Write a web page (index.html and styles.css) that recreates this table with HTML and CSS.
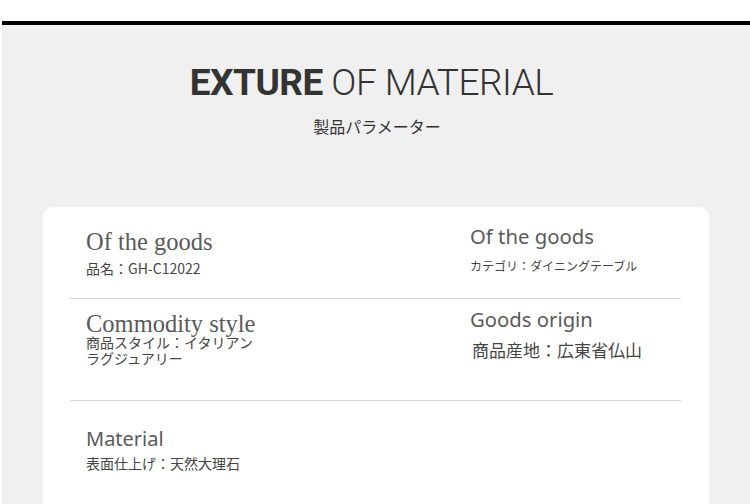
FILE: index.html
```html
<!DOCTYPE html>
<html lang="ja">
<head>
<meta charset="utf-8">
<link rel="stylesheet" href="styles.css">
</head>
<body>
<div class="page">
  <div class="panel">
    <h1 class="title"><span class="bold">EXTURE</span> OF MATERIAL</h1>
    <p class="subtitle">製品パラメーター</p>
    <div class="card">
      <div class="row row1">
        <div class="cell c1">
          <div class="name serif">Of the goods</div>
          <div class="val">品名：GH-C12022</div>
        </div>
        <div class="cell c2">
          <div class="name sans">Of the goods</div>
          <div class="val small">カテゴリ：ダイニングテーブル</div>
        </div>
      </div>
      <div class="row row2">
        <div class="cell c1">
          <div class="name serif">Commodity style</div>
          <div class="val tight">商品スタイル：イタリアン<br>ラグジュアリー</div>
        </div>
        <div class="cell c2">
          <div class="name sans">Goods origin</div>
          <div class="val big">商品産地：広東省仏山</div>
        </div>
      </div>
      <div class="row row3">
        <div class="cell c1">
          <div class="name sans mat">Material</div>
          <div class="val">表面仕上げ：天然大理石</div>
        </div>
      </div>
    </div>
  </div>
</div>
</body>
</html>
```
FILE: styles.css
```css
html, body {
  margin: 0;
  padding: 0;
  background: #ffffff;
  height: 504px;
  overflow: hidden;
}
.page {
  padding-top: 21px;
  padding-left: 2px;
}
.panel {
  border-top: 4px solid #000;
  background: #f0f0f0;
  height: 479px;
  padding-top: 1px;
  overflow: hidden;
  font-family: "Noto Sans", "Noto Sans CJK JP", sans-serif;
}
.title {
  margin: 33px 0 0;
  padding-right: 9px;
  text-align: center;
  font-family: Roboto, "Noto Sans", sans-serif;
  font-size: 37px;
  letter-spacing: -0.5px;
  line-height: 48px;
  font-weight: 300;
  color: #333;
}
.title .bold {
  font-weight: 700;
}
.subtitle {
  margin: 8px 0 0;
  padding-left: 2px;
  text-align: center;
  font-family: "Noto Sans CJK JP", sans-serif;
  font-size: 16px;
  line-height: 22px;
  color: #333;
}
.card {
  margin: 70px 0 0 41px;
  width: 666px;
  height: 320px;
  background: #fff;
  border-radius: 10px;
  padding: 0 28px 0 27px;
  box-sizing: border-box;
}
.row {
  display: grid;
  grid-template-columns: 400px 1fr;
  border-bottom: 1px solid #d9d9d9;
}
.row1 { height: 91px; }
.row2 { height: 101px; }
.row3 { border-bottom: none; }
.c1 { padding-left: 16px; }
.name {
  color: #5a5a5a;
  font-size: 20.3px;
  line-height: 26px;
}
.serif {
  font-family: "Liberation Serif", "DejaVu Serif", serif;
  font-size: 24.5px;
  line-height: 26px;
}
.sans {
  font-family: "Noto Sans", sans-serif;
  font-weight: 400;
}
.mat { font-size: 20px; }
.val {
  font-family: "Noto Sans CJK JP", sans-serif;
  font-size: 14px;
  line-height: 18px;
  color: #444;
}
.val.small { font-size: 12px; }
.val.big { font-size: 17px; line-height: 22px; margin-left: 2px; }
.val.tight { line-height: 16px; }
.row1 .c1 { padding-top: 22px; }
.row1 .c1 .val { margin-top: 4px; }
.row1 .c2 { padding-top: 16px; }
.row1 .c2 .val { margin-top: 8px; }
.row2 .serif { line-height: 20px; }
.row2 .c1 { padding-top: 15px; }
.row2 .c1 .val { margin-top: 0; }
.row2 .c2 { padding-top: 7px; }
.row2 .c2 .val { margin-top: 7px; }
.row3 .c1 { padding-top: 25px; }
.row3 .c1 .val { margin-top: 2px; }
```
